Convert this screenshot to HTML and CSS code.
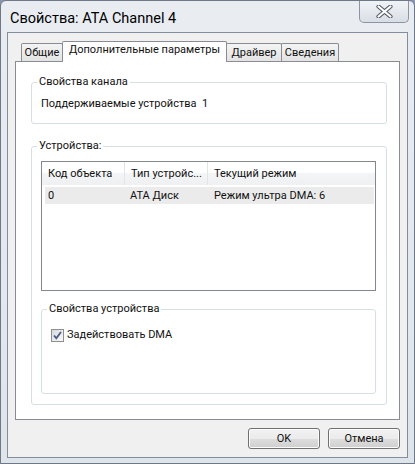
FILE: index.html
```html
<!DOCTYPE html>
<html lang="ru">
<head>
<meta charset="utf-8">
<title>Свойства: ATA Channel 4</title>
<link rel="stylesheet" href="styles.css">
</head>
<body>
<div class="window">
  <div class="titlebar">
    <span class="title">Свойства: ATA Channel 4</span>
    <div class="close">
      <svg width="17" height="13" viewBox="0 0 17 13">
        <path d="M2.5 1.5 L14.5 11.5 M14.5 1.5 L2.5 11.5" stroke="#4f5966" stroke-width="4.2" stroke-linecap="round" fill="none"/>
        <path d="M2.5 1.5 L14.5 11.5 M14.5 1.5 L2.5 11.5" stroke="#ffffff" stroke-width="2.2" stroke-linecap="round" fill="none"/>
      </svg>
    </div>
  </div>
  <div class="client">
    <div class="tabs">
      <div class="tab tab-general">Общие</div>
      <div class="tab tab-advanced active">Дополнительные параметры</div>
      <div class="tab tab-driver">Драйвер</div>
      <div class="tab tab-details">Сведения</div>
    </div>
    <div class="panel">
      <fieldset class="group g-channel">
        <legend>Свойства канала</legend>
        <div class="prop"><span class="prop-label">Поддерживаемые устройства</span><span class="prop-value">1</span></div>
      </fieldset>
      <fieldset class="group g-devices">
        <legend>Устройства:</legend>
        <div class="listview">
          <div class="lv-head">
            <div class="lv-hcell">Код объекта</div>
            <div class="lv-hcell">Тип устройс...</div>
            <div class="lv-hcell last">Текущий режим</div>
          </div>
          <div class="lv-row">
            <div class="lv-cell">0</div>
            <div class="lv-cell">ATA Диск</div>
            <div class="lv-cell">Режим ультра DMA: 6</div>
          </div>
        </div>
        <fieldset class="group g-devprops">
          <legend>Свойства устройства</legend>
          <label class="check">
            <span class="box">
              <svg width="11" height="11" viewBox="0 0 11 11">
                <path d="M2 5.5 L4.3 8.2 L9 2" stroke="#4a5d85" stroke-width="1.8" fill="none"/>
              </svg>
            </span>
            Задействовать DMA
          </label>
        </fieldset>
      </fieldset>
    </div>
    <div class="buttons">
      <button class="btn">OK</button>
      <button class="btn">Отмена</button>
    </div>
  </div>
</div>
</body>
</html>
```
FILE: styles.css
```css
html, body {
  margin: 0;
  padding: 0;
}
body {
  width: 415px;
  height: 464px;
  overflow: hidden;
  background: #8a93b0;
  font-family: Roboto, "Liberation Sans", sans-serif;
  font-size: 11px;
  color: #111;
}
.window {
  box-sizing: border-box;
  height: 464px;
  border: 1px solid #6e7886;
  border-radius: 6px 6px 0 0;
  background: linear-gradient(#e9edf2, #dfe4eb);
  display: flex;
  flex-direction: column;
}
.titlebar {
  flex: none;
  height: 31px;
  display: flex;
  justify-content: space-between;
  align-items: flex-start;
}
.title {
  font-size: 14.5px;
  line-height: 20px;
  margin: 8px 0 0 9px;
  color: #000;
}
.close {
  box-sizing: border-box;
  width: 50px;
  height: 22px;
  margin-right: 5px;
  border: 1px solid #8c96a3;
  border-top: none;
  border-radius: 0 0 5px 5px;
  background: linear-gradient(#f1f3f6, #d9dee5);
  display: flex;
  align-items: center;
  justify-content: center;
}
.client {
  flex: 1;
  margin: 0 6px 5px 6px;
  border: 1px solid #838e9c;
  background: #f0f0f0;
  padding: 8px 7px 8px 7px;
  display: flex;
  flex-direction: column;
  min-height: 0;
}
.tabs {
  flex: none;
  height: 21px;
  display: flex;
  align-items: flex-end;
  padding-left: 6px;
  position: relative;
  z-index: 1;
}
.tab {
  box-sizing: border-box;
  height: 18px;
  margin-bottom: 1px;
  margin-left: -1px;
  border: 1px solid #898c95;
  border-bottom: none;
  border-radius: 2px 2px 0 0;
  background: linear-gradient(#f4f4f4, #e3e3e3);
  text-align: center;
  line-height: 17px;
  white-space: nowrap;
}
.tab-general { width: 42px; margin-left: 0; }
.tab-advanced { width: 165px; }
.tab-driver { width: 56px; }
.tab-details { width: 58px; }
.tab.active {
  height: 21px;
  margin-bottom: 0;
  background: #fff;
  line-height: 16px;
}
.panel {
  flex: 1;
  margin-top: -1px;
  border: 1px solid #898c95;
  background: #fff;
  padding: 12px 12px 14px 15px;
  display: flex;
  flex-direction: column;
  min-height: 0;
}
.group {
  margin: 0;
  border: 1px solid #d5dfe5;
  border-radius: 3px;
  padding: 0 9px;
  min-width: 0;
}
.group legend {
  padding: 0 2px;
  margin-left: -4px;
  line-height: 16px;
}
.prop {
  display: flex;
  line-height: 16px;
  margin: 6px 0 11px 0;
  white-space: nowrap;
}
.prop-label {
  width: 161px;
}
.g-devices {
  flex: 1;
  margin-top: 14px;
  padding: 0 10px 10px 9px;
  display: flex;
  flex-direction: column;
}
.listview {
  flex: none;
  box-sizing: border-box;
  height: 130px;
  margin-top: 7px;
  border: 1px solid #828790;
  background: #fff;
}
.lv-head {
  display: grid;
  grid-template-columns: 83px 83px 1fr;
  height: 23px;
  background: linear-gradient(#ffffff 0%, #ffffff 45%, #f4f5f7 50%, #eef0f2 100%);
}
.lv-hcell {
  border-right: 1px solid #e3e4e6;
  padding: 1px 0 0 6px;
  line-height: 22px;
  white-space: nowrap;
}
.lv-hcell.last {
  border-right: none;
}
.lv-row {
  display: grid;
  grid-template-columns: 82px 84px 1fr;
  height: 17px;
  margin: 2px 1px 0 3px;
  background: #ebebeb;
  line-height: 17px;
}
.lv-cell {
  padding-left: 3px;
  white-space: nowrap;
}
.g-devprops {
  flex: 1;
  margin-top: 10px;
}
.check {
  display: flex;
  align-items: center;
  line-height: 16px;
  margin-top: 10px;
  margin-left: 0;
}
.box {
  box-sizing: border-box;
  width: 13px;
  height: 13px;
  border: 1px solid #8e8f8f;
  background: linear-gradient(135deg, #d6d8dc, #fbfbfb);
  margin-right: 3px;
  display: flex;
  align-items: center;
  justify-content: center;
}
.buttons {
  flex: none;
  display: flex;
  justify-content: flex-end;
  gap: 8px;
  margin-top: 8px;
}
.btn {
  box-sizing: border-box;
  width: 72px;
  height: 21px;
  padding: 0;
  border: 1px solid #707070;
  border-radius: 3px;
  background: linear-gradient(#f2f2f2 0%, #ebebeb 50%, #dddddd 51%, #cfcfcf 100%);
  box-shadow: inset 0 0 0 1px #fbfbfb;
  font-family: inherit;
  font-size: 11px;
  color: #111;
}
```
